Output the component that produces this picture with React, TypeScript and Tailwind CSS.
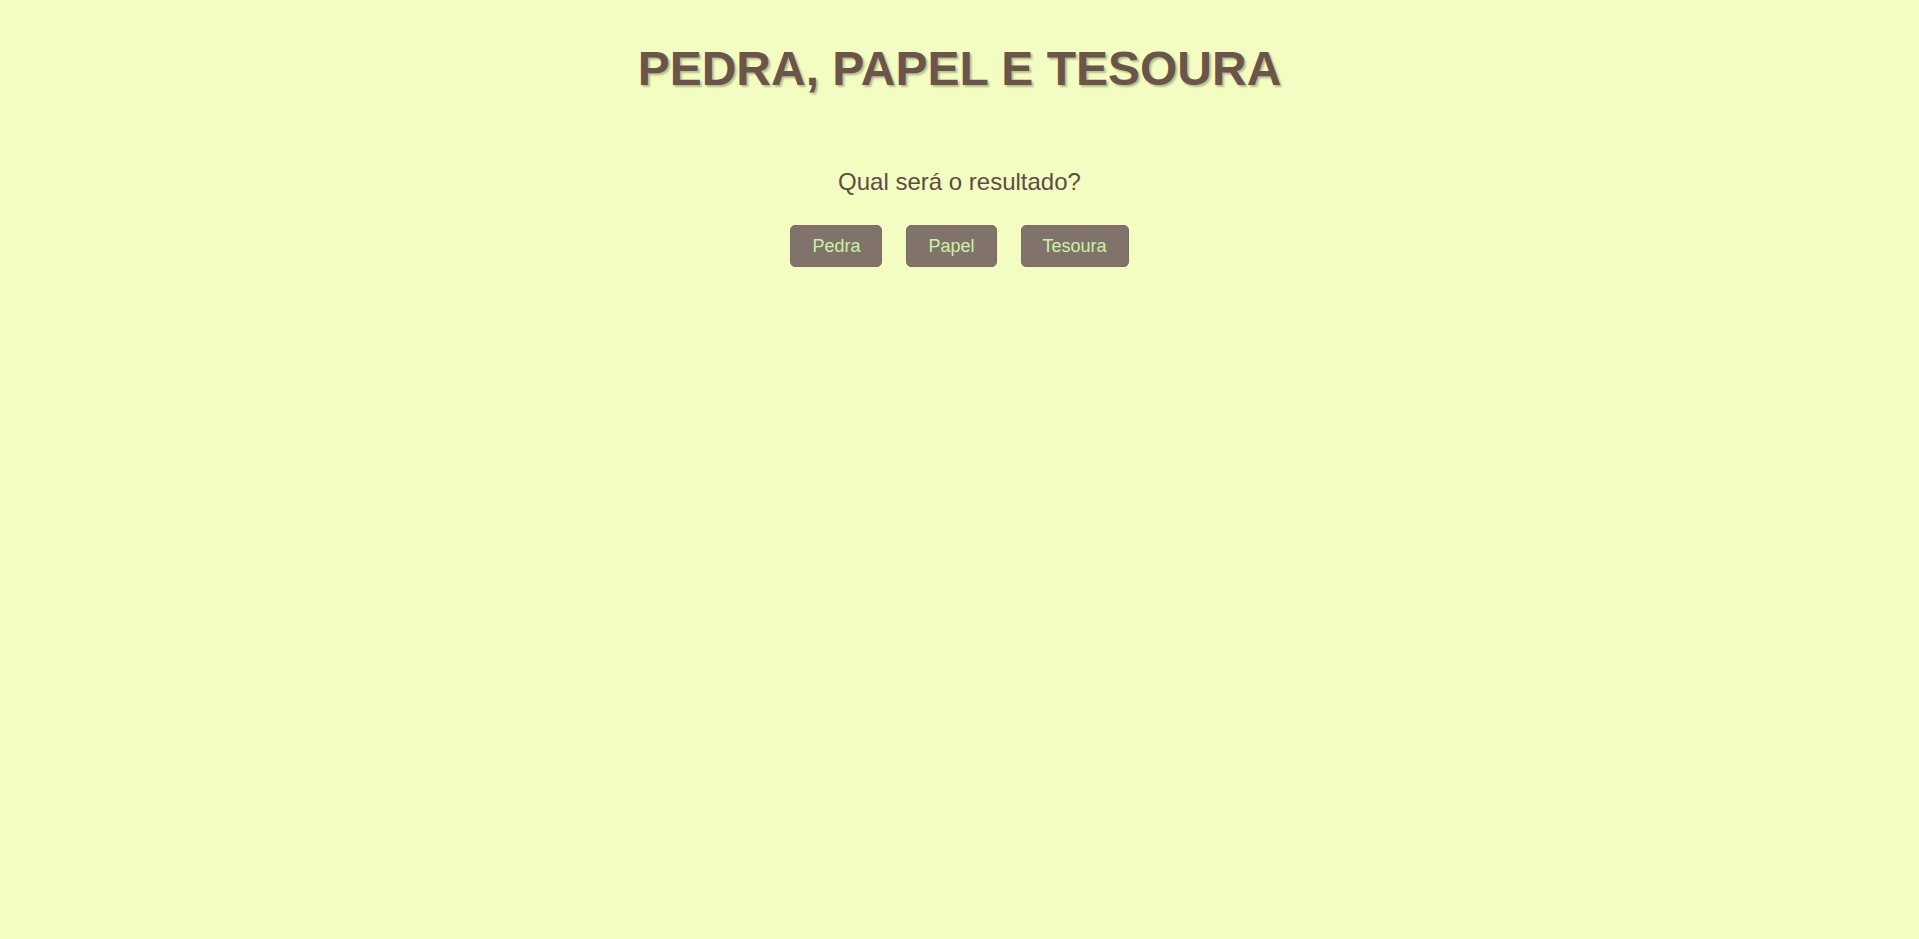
import React, { useState } from 'react';

const choices = ['Pedra', 'Papel', 'Tesoura'];

export default function App() {
  const [picked, setPicked] = useState<string | null>(null);

  return (
    <div className="min-h-screen bg-[#f3fdc1] text-center font-['Liberation_Sans',Arial,sans-serif] pt-[33px]">
      <h1 className="text-[48px] leading-normal font-bold text-[#6b5449] [text-shadow:2px_2px_2px_rgba(0,0,0,0.25)]">
        PEDRA, PAPEL E TESOURA
      </h1>

      <p className="mt-[59px] text-[24px] leading-normal text-[#5f4c44]">Qual será o resultado?</p>

      <div className="mt-[25px] flex justify-center gap-6">
        {choices.map(c => (
          <button
            key={c}
            onClick={() => setPicked(c)}
            className="h-[42px] px-[21px] border border-[#7a6c64] rounded-[5px] bg-[#81736b] text-[18px] leading-normal text-[#c8f3a0] cursor-pointer"
          >
            {c}
          </button>
        ))}
      </div>

      {picked && <p className="mt-6 text-[18px] text-[#5f4c44]">{picked}</p>}
    </div>
  );
}
